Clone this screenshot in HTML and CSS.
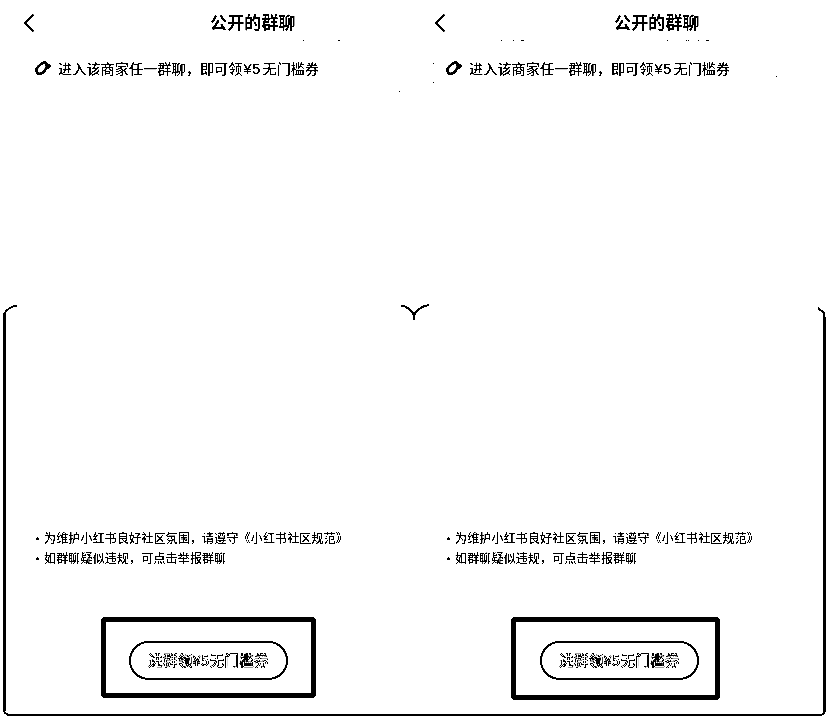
FILE: index.html
```html
<!DOCTYPE html>
<html lang="zh-CN">
<head>
<meta charset="utf-8">
<title>公开的群聊</title>
<link rel="stylesheet" href="styles.css">
</head>
<body>
<main class="board">
  <section class="panel">
    <header class="bar">
      <svg class="back" width="12" height="20" viewBox="0 0 12 20"><path d="M10.5 1.5L2 10L10.5 18.5"/></svg>
      <h1>公开的群聊</h1>
    </header>
    <p class="notice">
      <svg class="ticket" width="18" height="16" viewBox="0 0 18 16"><path class="body" d="M2.5 11Q2 9.5 3.5 7.5L7 4Q9.5 1.8 11.5 3Q13.3 4.5 12.8 7Q12.5 8.5 10.5 10.8L8.5 12.7Q5.5 15 3.8 13.2Z"/><path class="tab" d="M11 1L13 3.5L17 5V7L13 9.5Z"/></svg>
      <span>进入该商家任一群聊，即可领<span class="price">¥5</span>无门槛券</span>
    </p>
    <ul class="rules">
      <li>为维护小红书良好社区氛围，请遵守《小红书社区规范》</li>
      <li>如群聊疑似违规，可点击举报群聊</li>
    </ul>
    <div class="highlight"><button>进群领¥5无门槛券</button></div>
  </section>
  <section class="panel second">
    <header class="bar">
      <svg class="back" width="12" height="20" viewBox="0 0 12 20"><path d="M10.5 1.5L2 10L10.5 18.5"/></svg>
      <h1>公开的群聊</h1>
    </header>
    <p class="notice">
      <svg class="ticket" width="18" height="16" viewBox="0 0 18 16"><path class="body" d="M2.5 11Q2 9.5 3.5 7.5L7 4Q9.5 1.8 11.5 3Q13.3 4.5 12.8 7Q12.5 8.5 10.5 10.8L8.5 12.7Q5.5 15 3.8 13.2Z"/><path class="tab" d="M11 1L13 3.5L17 5V7L13 9.5Z"/></svg>
      <span>进入该商家任一群聊，即可领<span class="price">¥5</span>无门槛券</span>
    </p>
    <ul class="rules">
      <li>为维护小红书良好社区氛围，请遵守《小红书社区规范》</li>
      <li>如群聊疑似违规，可点击举报群聊</li>
    </ul>
    <div class="highlight"><button>进群领¥5无门槛券</button></div>
  </section>
  <svg class="frame" width="831" height="720" viewBox="0 0 831 720" shape-rendering="crispEdges">
    <path class="thick" d="M4.5 314V711M824.5 317V712"/>
    <path class="line" d="M4 314Q8 307 17 305.5M401 305.5Q410 307 414 315Q418 307 429 305M414 313V320M818 308L824 313V318M4 711Q6 715 10 715H820Q824 715 825 710"/>
    <path class="specks" d="M303 40.5h1M338 40.5h2M399 91.5h1M501 40.5h1M513 40.5h1M521 40.5h3M667 40.5h1M686 40.5h1M688 40.5h1M698 40.5h1M706 40.5h3M433 63.5h1M433 82.5h1M776 76.5h1"/>
  </svg>
</main>
</body>
</html>
```
FILE: styles.css
```css
* { box-sizing: border-box; margin: 0; padding: 0; }
body { background: #fff; }
.board {
  position: relative;
  display: grid;
  grid-template-columns: 411px 420px;
  width: 831px;
  height: 720px;
  overflow: hidden;
  background: #fff;
  color: #000;
  font-family: "Noto Sans CJK SC", sans-serif;
  filter: contrast(12);
}
.panel { display: flex; flex-direction: column; }
.bar {
  display: flex;
  align-items: center;
  height: 46px;
  padding-left: 23px;
}
.back { fill: none; stroke: #000; stroke-width: 2.2; }
.bar h1 {
  margin: -2px 0 0 175px;
  font-size: 17px;
  letter-spacing: 0.15px;
  line-height: 24px;
  font-weight: 700;
}
.second .bar h1 { margin-left: 168px; }
.notice {
  display: flex;
  align-items: center;
  height: 46px;
  padding-left: 34px;
  font-size: 14.2px;
  line-height: 20px;
  font-weight: 500;
  white-space: nowrap;
}
.notice > span { margin-top: -2px; }
.ticket { margin: -2px 6px 0 0; }
.ticket .body { fill: none; stroke: #000; stroke-width: 2.7; }
.price {
  display: inline-block;
  width: 20px;
  padding-left: 1px;
  font-family: "Liberation Sans", sans-serif;
  font-size: 14.5px;
  letter-spacing: 0.8px;
  -webkit-text-stroke: 0.3px #000;
}
.rules {
  margin-top: 436px;
  padding-left: 35px;
  list-style: none;
  font-size: 12px;
  letter-spacing: 0.16px;
  line-height: 20px;
  font-weight: 500;
  white-space: nowrap;
}
.rules li { display: flex; align-items: center; }
.rules li::before {
  content: "";
  width: 3px;
  height: 3px;
  margin: 0 5px 0 1px;
  border-radius: 50%;
  background: #000;
}
.highlight {
  display: flex;
  width: 215px;
  height: 81px;
  margin: 49px 0 0 101px;
  padding: 19px 0 0 23px;
  border: 5px solid #000;
  border-radius: 4px;
}
.second .highlight { width: 209px; height: 83px; margin-left: 100px; padding-left: 24px; }
.highlight button {
  width: 159px;
  height: 39px;
  padding-bottom: 2px;
  border: 2px solid #000;
  border-radius: 20px;
  background: #fff;
  color: #fff;
  font: 500 14.5px "Noto Sans CJK SC", sans-serif;
  letter-spacing: 0.3px;
  -webkit-text-stroke: 0.68px #000;
  white-space: nowrap;
}
.frame { position: absolute; inset: 0; pointer-events: none; }
.thick { fill: none; stroke: #000; stroke-width: 3; }
.line { fill: none; stroke: #000; stroke-width: 2; }
.specks { stroke: #000; stroke-width: 1; }
```
